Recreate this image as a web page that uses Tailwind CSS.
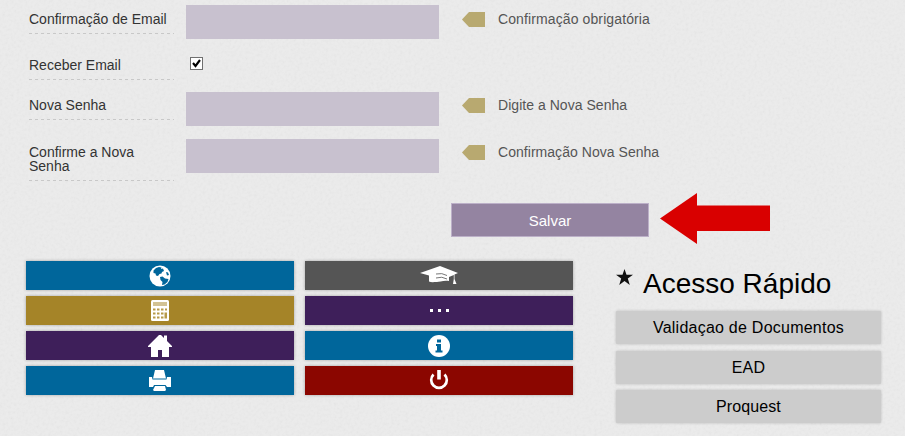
<!DOCTYPE html>
<html lang="pt-BR">

<head>
    <meta charset="UTF-8">
    <meta name="viewport" content="width=device-width, initial-scale=1.0">
    <title>Meus Dados</title>
    <script src="https://cdn.jsdelivr.net/npm/@tailwindcss/browser@4"></script>
</head>

<body class="relative w-[905px] h-[436px] overflow-hidden bg-[#ebebeb] font-['Liberation_Sans',Arial,sans-serif]">
    <!-- paper texture -->
    <svg class="absolute inset-0 -z-10 w-full h-full opacity-[0.035]" aria-hidden="true">
        <filter id="paper">
            <feTurbulence type="fractalNoise" baseFrequency="0.35" numOctaves="3" stitchTiles="stitch" />
            <feColorMatrix type="matrix" values="1.6 0 0 0 -0.1  1.6 0 0 0 -0.1  1.6 0 0 0 -0.1  0 0 0 0 1" />
        </filter>
        <rect width="100%" height="100%" filter="url(#paper)" />
    </svg>

    <form class="pt-[5px] pl-[29px] text-sm leading-[14px] text-[#333]">
        <div class="flex items-start h-[46px]">
            <label for="email2" class="w-[145px] mr-3 mt-[7px]">Confirmação de Email
                <svg class="block h-px w-full mt-[7px]"><line x1="0" y1="0.5" x2="145" y2="0.5" stroke="#c8c8c8" stroke-dasharray="3 3" /></svg>
            </label>
            <input id="email2" type="text" class="w-[253px] h-[34px] bg-[#c8c1cf]">
            <svg class="w-[23px] h-[15px] ml-[23px] mt-[7px]" viewBox="0 0 23 15"><path d="M0 7.5 7 0H23V15H7Z" fill="#b8a970" /></svg>
            <span class="ml-[13px] mt-[7px] tracking-[0.11px] text-[#555]">Confirmação obrigatória</span>
        </div>
        <div class="flex items-start h-[41px]">
            <label for="receber" class="w-[145px] mr-4 mt-[7px]">Receber Email
                <svg class="block h-px w-full mt-[7px]"><line x1="0" y1="0.5" x2="145" y2="0.5" stroke="#c8c8c8" stroke-dasharray="3 3" /></svg>
            </label>
            <button id="receber" type="button" role="checkbox" aria-checked="true" class="w-[13px] h-[13px] mt-[6px] bg-white border border-[#707070]">
                <svg class="w-[11px] h-[11px]" viewBox="0 0 11 11"><path d="M2 5 4.5 8 9 2" fill="none" stroke="#000" stroke-width="2.1" /></svg>
            </button>
        </div>
        <div class="flex items-start h-[47px]">
            <label for="senha" class="w-[145px] mr-3 mt-[6px]">Nova Senha
                <svg class="block h-px w-full mt-[7px]"><line x1="0" y1="0.5" x2="145" y2="0.5" stroke="#c8c8c8" stroke-dasharray="3 3" /></svg>
            </label>
            <input id="senha" type="password" class="w-[253px] h-[34px] bg-[#c8c1cf]">
            <svg class="w-[23px] h-[15px] ml-[23px] mt-[6px]" viewBox="0 0 23 15"><path d="M0 7.5 7 0H23V15H7Z" fill="#b8a970" /></svg>
            <span class="ml-[13px] mt-[6px] tracking-[0.04px] text-[#555]">Digite a Nova Senha</span>
        </div>
        <div class="flex items-start h-[64px]">
            <label for="senha2" class="w-[145px] mr-3 mt-[6px]">Confirme a Nova<br>Senha
                <svg class="block h-px w-full mt-[7px]"><line x1="0" y1="0.5" x2="145" y2="0.5" stroke="#c8c8c8" stroke-dasharray="3 3" /></svg>
            </label>
            <input id="senha2" type="password" class="w-[253px] h-[34px] bg-[#c8c1cf]">
            <svg class="w-[23px] h-[15px] ml-[23px] mt-[6px]" viewBox="0 0 23 15"><path d="M0 7.5 7 0H23V15H7Z" fill="#b8a970" /></svg>
            <span class="ml-[13px] mt-[6px] tracking-[0.04px] text-[#555]">Confirmação Nova Senha</span>
        </div>
        <div class="flex h-[58px] pl-[422px]">
            <button type="button" class="w-[198px] h-[34px] pt-0.5 bg-[#9484a1] border border-[#bcb0c8] text-[15px] text-white">Salvar</button>
            <svg class="w-[110px] h-[51px] ml-[11px] -mt-[10px]" viewBox="0 0 110 51"><path d="M0 25.5 37 0V12.5H110V38H37V51Z" fill="#d90000" /></svg>
        </div>
    </form>

    <div class="flex pl-[26px]">
        <nav class="grid grid-cols-[268px_268px] auto-rows-[29px] gap-x-[11px] gap-y-[6px] *:flex *:items-center *:justify-center *:shadow-[0_0_3px_rgba(0,0,0,0.3)]">
            <a class="bg-[#00669b]" title="Site">
                <svg class="w-[22px] h-[22px]" viewBox="0 0 22 22">
                    <circle cx="11" cy="11" r="10.5" fill="#fff" />
                    <path d="M4.5 5.5 7 3 10 2 12.5 2.5 12 4 14 3.5 15 6 13 7 12.5 8.5 10.5 9 9 11 7 10.5 6.5 8.5 4.5 8ZM11 12 13.5 11.5 16 13.5 19.5 14 18.5 17 15.5 19.5 13 20 13.5 17 11.5 15ZM17 7 19 7.5 20 10 18 10.5Z" fill="#00669b" />
                </svg>
            </a>
            <a class="bg-[#555]" title="Acadêmico">
                <svg class="w-[38px] h-5" viewBox="0 0 38 20">
                    <path d="M0 7 20 0 38 7 34.5 8.5V13L36.5 18H33L33.8 13V9L29 11V15C24 14 19 16 17 16 14 16 11 16.5 9 15.5V9.5Z" fill="#fff" />
                    <path d="M16 8Q22 6.5 27 9.5M16 12Q22 10 27 13" fill="none" stroke="#777" />
                </svg>
            </a>
            <a class="bg-[#a58428]" title="Financeiro">
                <svg class="w-[18px] h-[21px]" viewBox="0 0 18 21">
                    <rect width="18" height="21" rx="1.5" fill="#fff" />
                    <path d="M2 2H16V6H2Z" fill="#d2c294" />
                    <path d="M2 8.5h2.5v2H2zM6 8.5h2.5v2H6zM10 8.5h2.5v2H10zM14 8.5h2v2h-2zM2 12.5h2.5v2H2zM6 12.5h2.5v2H6zM10 12.5h2.5v2H10zM2 16.5h2.5v2H2zM6 16.5h2.5v2H6zM10 16.5h2.5v2H10zM13.5 12.5H16v6h-2.5z" fill="#b69a4b" />
                </svg>
            </a>
            <a class="bg-[#3e1f5a]" title="Mais">
                <svg class="w-[19px] h-[3px]" viewBox="0 0 19 3"><path d="M0 0h3v3H0zM8 0h3v3H8zM16 0h3v3h-3z" fill="#fff" /></svg>
            </a>
            <a class="bg-[#3e1f5a]" title="Início">
                <svg class="w-6 h-[23px]" viewBox="0 0 24 23"><path d="M0 12 11 1H13L16 4V1.5H19V7L24 12V13H21V23H14V16H10V23H3V13H0Z" fill="#fff" /></svg>
            </a>
            <a class="bg-[#00669b]" title="Informações">
                <svg class="w-[22px] h-[22px]" viewBox="0 0 22 22">
                    <circle cx="11" cy="11" r="11" fill="#fff" />
                    <path d="M9 4.5h4v3H9zM8 9h5v6.5h1.5v2h-7v-2H9V11H8z" fill="#00669b" />
                </svg>
            </a>
            <a class="bg-[#00669b]" title="Imprimir">
                <svg class="w-[22px] h-[21px]" viewBox="0 0 22 21">
                    <path d="M6 0H15L17 8.5H4ZM0 7H3L3.5 9.5H17.5L18 7H22V17H18L16.5 15H5L4 17H0ZM6 16H16L17 20 16 21H5L4 20Z" fill="#fff" />
                </svg>
            </a>
            <a class="bg-[#8b0600]" title="Sair">
                <svg class="w-5 h-[21px]" viewBox="0 0 20 21">
                    <path d="M4.5 4.5A7.8 7.8 0 1 0 15.5 4.5" fill="none" stroke="#fff" stroke-width="2.7" />
                    <path d="M8.2 0h3.6v9.5H8.2z" fill="#fff" />
                </svg>
            </a>
        </nav>

        <aside class="ml-[43px] w-[265px]">
            <h2 class="flex h-[50px] text-[28px] leading-[45px] text-black">
                <svg class="w-[17px] h-4 mt-2 mr-[10px]" viewBox="0 0 17 16"><path d="M8.5 0 10.5 5.8H17L11.8 9.5 13.8 16 8.5 12.1 3.2 16 5.2 9.5 0 5.8H6.5Z" fill="#111" /></svg>
                Acesso Rápido
            </h2>
            <ul class="flex flex-col gap-[6.5px] text-base text-black text-center *:h-[33px] *:leading-[33px] *:rounded-[1px] *:bg-[#ccc] *:shadow-[0_0_3px_rgba(0,0,0,0.2)]">
                <li class="tracking-[0.24px]">Validaçao de Documentos</li>
                <li class="tracking-[0.2px]">EAD</li>
                <li class="tracking-[0.1px]">Proquest</li>
            </ul>
        </aside>
    </div>
</body>

</html>
